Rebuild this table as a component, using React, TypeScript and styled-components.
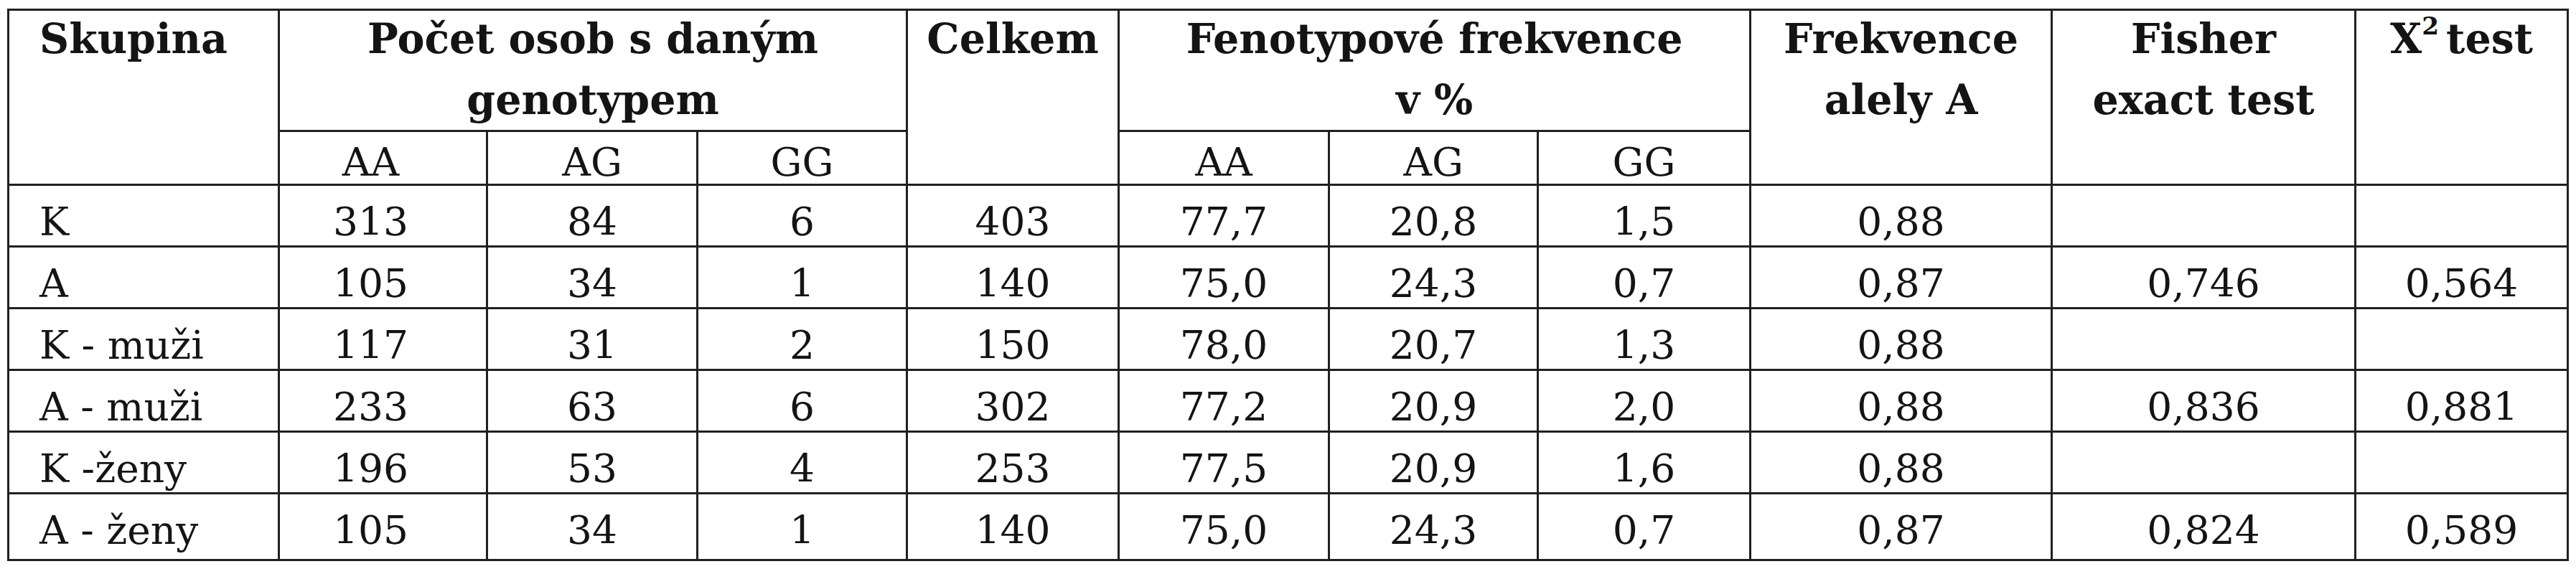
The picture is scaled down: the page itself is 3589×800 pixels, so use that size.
import styled, { createGlobalStyle } from "styled-components";

const GlobalStyle = createGlobalStyle`
  html, body {
    margin: 0;
    padding: 0;
    background: #ffffff;
  }
  body {
    font-family: "DejaVu Serif", "Liberation Serif", serif;
    color: #141414;
  }
`;

const Page = styled.div`
  padding: 12px 0 0 10px;
`;

const Table = styled.table`
  border-collapse: collapse;
  table-layout: fixed;
  width: 3569px;
  font-size: 55px;
  border: 3px solid #202020;
`;

const HeadCell = styled.th<{ $align?: "left" | "center" }>`
  border: 3px solid #202020;
  padding: ${(p) => (p.$align === "left" ? "0 0 0 42px" : "0")};
  text-align: ${(p) => p.$align ?? "center"};
  vertical-align: top;
  font-weight: bold;
  font-size: 57px;
`;

const HeadText = styled.div`
  line-height: 85px;
  margin-top: -4px;
  white-space: nowrap;
`;

const Sup = styled.sup`
  font-size: 0.6em;
  line-height: 0;
  vertical-align: 0.75em;
  margin-right: 10px;
`;

const SubCell = styled.th<{ $shift?: boolean }>`
  border: 3px solid #202020;
  padding: 12px ${(p) => (p.$shift ? "34px" : "0")} 0 0;
  line-height: 60px;
  font-weight: normal;
  text-align: center;
  vertical-align: top;
`;

const Row = styled.tr<{ $last?: boolean }>`
  height: ${(p) => (p.$last ? 93 : 86)}px;
`;

const Cell = styled.td<{ $align?: "left" | "center"; $shift?: boolean }>`
  border: 3px solid #202020;
  padding: ${(p) =>
    p.$align === "left" ? "20px 0 0 42px" : p.$shift ? "20px 34px 0 0" : "20px 0 0"};
  line-height: 60px;
  text-align: ${(p) => p.$align ?? "center"};
  vertical-align: top;
  white-space: nowrap;
`;

const widths = [377, 290, 293, 292, 295, 293, 291, 296, 420, 423, 296];

const rows: string[][] = [
  ["K", "313", "84", "6", "403", "77,7", "20,8", "1,5", "0,88", "", ""],
  ["A", "105", "34", "1", "140", "75,0", "24,3", "0,7", "0,87", "0,746", "0,564"],
  ["K - muži", "117", "31", "2", "150", "78,0", "20,7", "1,3", "0,88", "", ""],
  ["A - muži", "233", "63", "6", "302", "77,2", "20,9", "2,0", "0,88", "0,836", "0,881"],
  ["K -ženy", "196", "53", "4", "253", "77,5", "20,9", "1,6", "0,88", "", ""],
  ["A - ženy", "105", "34", "1", "140", "75,0", "24,3", "0,7", "0,87", "0,824", "0,589"],
];

export default function App() {
  return (
    <>
      <GlobalStyle />
      <Page>
        <Table>
          <colgroup>
            {widths.map((w, i) => (
              <col key={i} style={{ width: w }} />
            ))}
          </colgroup>
          <thead>
            <tr style={{ height: 169 }}>
              <HeadCell rowSpan={2} $align="left">
                <HeadText>Skupina</HeadText>
              </HeadCell>
              <HeadCell colSpan={3}>
                <HeadText>
                  Počet osob s daným
                  <br />
                  genotypem
                </HeadText>
              </HeadCell>
              <HeadCell rowSpan={2}>
                <HeadText>Celkem</HeadText>
              </HeadCell>
              <HeadCell colSpan={3}>
                <HeadText>
                  Fenotypové frekvence
                  <br />v %
                </HeadText>
              </HeadCell>
              <HeadCell rowSpan={2}>
                <HeadText>
                  Frekvence
                  <br />
                  alely A
                </HeadText>
              </HeadCell>
              <HeadCell rowSpan={2}>
                <HeadText>
                  Fisher
                  <br />
                  exact test
                </HeadText>
              </HeadCell>
              <HeadCell rowSpan={2}>
                <HeadText>
                  X<Sup>2</Sup>test
                </HeadText>
              </HeadCell>
            </tr>
            <tr style={{ height: 75 }}>
              <SubCell $shift>AA</SubCell>
              <SubCell>AG</SubCell>
              <SubCell>GG</SubCell>
              <SubCell>AA</SubCell>
              <SubCell>AG</SubCell>
              <SubCell>GG</SubCell>
            </tr>
          </thead>
          <tbody>
            {rows.map((r, i) => (
              <Row key={i} $last={i === rows.length - 1}>
                {r.map((v, j) => (
                  <Cell key={j} $align={j === 0 ? "left" : "center"} $shift={j === 1}>
                    {v}
                  </Cell>
                ))}
              </Row>
            ))}
          </tbody>
        </Table>
      </Page>
    </>
  );
}
